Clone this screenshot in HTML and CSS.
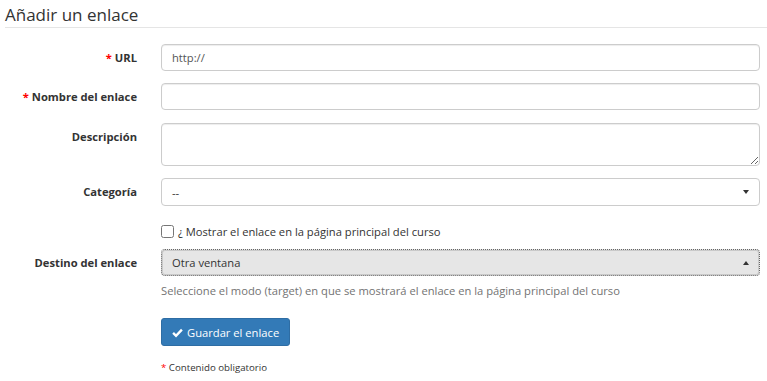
FILE: index.html
```
<!DOCTYPE html>
<html lang="es">
<head>
<meta charset="utf-8">
<title>Añadir un enlace</title>
<link rel="stylesheet" href="styles.css">
</head>
<body>
<div class="page">
  <h1 class="legend">Añadir un enlace</h1>
  <form class="form">
    <div class="row">
      <label class="label"><span class="req">*</span> URL</label>
      <div class="field"><input class="control" type="text" value="http://"></div>
    </div>
    <div class="row row-name">
      <label class="label"><span class="req">*</span> Nombre del enlace</label>
      <div class="field"><input class="control" type="text" value=""></div>
    </div>
    <div class="row">
      <label class="label">Descripción</label>
      <div class="field"><textarea class="control area"></textarea></div>
    </div>
    <div class="row">
      <label class="label">Categoría</label>
      <div class="field">
        <div class="control select"><span>--</span><span class="caret down"></span></div>
      </div>
    </div>
    <div class="row check-row">
      <div class="label"></div>
      <div class="field">
        <label class="check"><input type="checkbox" class="box"> ¿ Mostrar el enlace en la página principal del curso</label>
      </div>
    </div>
    <div class="row target-row">
      <label class="label">Destino del enlace</label>
      <div class="field">
        <div class="control select active"><span>Otra ventana</span><span class="caret up"></span></div>
        <p class="help">Seleccione el modo (target) en que se mostrará el enlace en la página principal del curso</p>
      </div>
    </div>
    <div class="row btn-row">
      <div class="label"></div>
      <div class="field">
        <button type="button" class="btn"><svg class="ico" viewBox="0 0 12 12" width="11" height="11"><path d="M1.2 6.4 L4.4 9.6 L10.8 2.8" fill="none" stroke="#fff" stroke-width="2.6" stroke-linecap="butt" stroke-linejoin="miter"/></svg>Guardar el enlace</button>
      </div>
    </div>
    <div class="row note-row">
      <div class="label"></div>
      <div class="field"><span class="note"><span class="req">*</span> Contenido obligatorio</span></div>
    </div>
  </form>
</div>
</body>
</html>
```
FILE: styles.css
```
html, body {
  margin: 0;
  padding: 0;
  background: #fff;
}
body {
  font-family: "Open Sans", "DejaVu Sans", sans-serif;
  color: #333;
  font-size: 11.2px;
}
.page {
  padding-left: 5px;
}
.legend {
  margin: 0;
  padding-top: 5px;
  padding-bottom: 2px;
  font-size: 17px;
  line-height: 20px;
  font-weight: 400;
  color: #333;
  border-bottom: 1px solid #e5e5e5;
}
.form {
  margin-top: 16px;
  padding-right: 7px;
}
.row {
  display: flex;
  align-items: flex-start;
  margin-bottom: 12px;
}
.row-name {
  margin-bottom: 13px;
}
.label {
  width: 132px;
  flex: none;
  text-align: right;
  font-weight: 700;
  line-height: 27px;
  margin-right: 24px;
  color: #333;
}
.req {
  color: #f00;
}
.field {
  flex: 1;
  min-width: 0;
}
.control {
  display: block;
  box-sizing: border-box;
  width: 100%;
  height: 27px;
  margin: 0;
  padding: 0 10px;
  border: 1px solid #ccc;
  border-radius: 4px;
  background: #fff;
  font-family: inherit;
  font-size: 11.2px;
  color: #555;
  box-shadow: inset 0 1px 1px rgba(0,0,0,.075);
  outline: none;
}
.area {
  height: 43px;
  resize: vertical;
  padding: 6px 10px;
}
.select {
  height: 28px;
  display: flex;
  align-items: center;
  justify-content: space-between;
  padding: 0 10px 0 10px;
  box-shadow: none;
  color: #333;
}
.select.active {
  height: 27px;
  background: #e6e6e6;
  border: 1px dotted #666;
  box-shadow: inset 0 0 0 1px #c9c9c9;
}
.caret {
  width: 0;
  height: 0;
  border-left: 3.5px solid transparent;
  border-right: 3.5px solid transparent;
}
.caret.down {
  border-top: 4px solid #333;
}
.caret.up {
  border-bottom: 4px solid #333;
}
.check-row {
  margin-bottom: 4px;
  height: 27px;
  align-items: center;
}
.check {
  display: flex;
  align-items: center;
  color: #333;
  font-size: 11.2px;
}
.box {
  width: 13px;
  height: 13px;
  margin: 0 4px 0 0;
}
.help {
  margin: 6px 0 0;
  line-height: 17px;
  color: #737373;
  font-size: 11.2px;
}
.target-row {
  margin-bottom: 19px;
}
.btn {
  display: inline-flex;
  align-items: center;
  height: 28px;
  padding: 0 10px 0 10px;
  background: #337ab7;
  border: 1px solid #2e6da4;
  border-radius: 3px;
  color: #fff;
  font-family: inherit;
  font-size: 11.2px;
}
.ico {
  margin-right: 4px;
}
.btn-row {
  margin-bottom: 12px;
}
.note-row .label {
  line-height: 20px;
}
.note {
  font-size: 9.7px;
  line-height: 20px;
  color: #333;
}
```
